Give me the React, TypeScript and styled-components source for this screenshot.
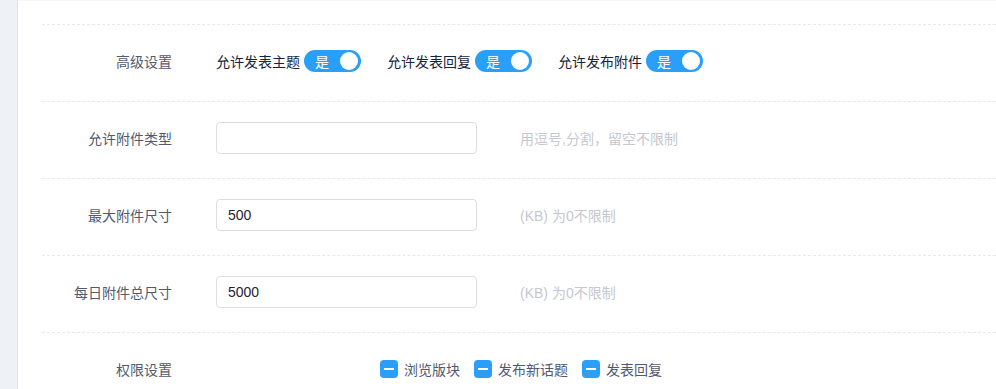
import React from "react";
import styled, { createGlobalStyle } from "styled-components";

const Global = createGlobalStyle`
  html, body { margin: 0; padding: 0; background: #fff; }
  body { font-family: "Liberation Sans", "Noto Sans CJK SC", sans-serif; }
  * { box-sizing: border-box; }
`;

const Page = styled.div`
  display: flex;
  height: 389px;
  overflow: hidden;
`;

const Sidebar = styled.div`
  width: 18px;
  flex: none;
  background: #eef1f5;
  border-right: 1px solid #dfe3e8;
`;

const Main = styled.div`
  flex: 1;
  background: #fff;
  border-top: 1px solid #f5f6f8;
  padding: 23px 0 0 24px;
`;

const Row = styled.div<{ $h?: number }>`
  display: grid;
  grid-template-columns: 130px 1fr;
  column-gap: 44px;
  align-items: center;
  height: ${(p) => p.$h ?? 77}px;
  padding-bottom: 4px;
  border-top: 1px dashed #e6e8eb;
`;

const Label = styled.div`
  text-align: right;
  font-size: 14px;
  color: #515a6e;
`;

const Content = styled.div<{ $indent?: number }>`
  display: flex;
  align-items: center;
  padding-left: ${(p) => p.$indent ?? 0}px;
`;

const SwitchGroup = styled.div`
  display: flex;
  align-items: center;
  gap: 4px;
  margin-right: 26px;
  font-size: 14px;
  color: #17233d;
`;

const Switch = styled.span`
  position: relative;
  display: inline-flex;
  align-items: center;
  width: 57px;
  height: 22px;
  border-radius: 11px;
  background: #2a9ffa;
  color: #fff;
  font-size: 14px;
  padding-left: 11px;
  &::after {
    content: "";
    position: absolute;
    right: 3px;
    top: 2px;
    width: 18px;
    height: 18px;
    border-radius: 50%;
    background: #fff;
  }
`;

const Input = styled.input`
  width: 261px;
  height: 32px;
  border: 1px solid #dcdee2;
  border-radius: 4px;
  padding: 0 11px;
  font-size: 14px;
  font-family: "Liberation Sans", "Noto Sans CJK SC", sans-serif;
  color: #1f2430;
  outline: none;
  background: #fff;
`;

const Hint = styled.span`
  margin-left: 43px;
  font-size: 14px;
  color: #c5c8ce;
`;

const CheckItem = styled.label`
  display: flex;
  align-items: center;
  gap: 6px;
  margin-right: 14px;
  font-size: 14px;
  color: #515a6e;
`;

const CheckBox = styled.span`
  position: relative;
  width: 18px;
  height: 18px;
  border-radius: 4px;
  background: #2a9ffa;
  &::after {
    content: "";
    position: absolute;
    left: 4px;
    right: 4px;
    top: 8px;
    height: 2px;
    background: #fff;
  }
`;

const switches = ["允许发表主题", "允许发表回复", "允许发布附件"];
const perms = ["浏览版块", "发布新话题", "发表回复"];

export default function App() {
  return (
    <Page>
      <Global />
      <Sidebar />
      <Main>
        <Row>
          <Label>高级设置</Label>
          <Content>
            {switches.map((s) => (
              <SwitchGroup key={s}>
                {s}
                <Switch>是</Switch>
              </SwitchGroup>
            ))}
          </Content>
        </Row>
        <Row>
          <Label>允许附件类型</Label>
          <Content>
            <Input defaultValue="" />
            <Hint>用逗号,分割，留空不限制</Hint>
          </Content>
        </Row>
        <Row>
          <Label>最大附件尺寸</Label>
          <Content>
            <Input defaultValue="500" />
            <Hint>(KB) 为0不限制</Hint>
          </Content>
        </Row>
        <Row>
          <Label>每日附件总尺寸</Label>
          <Content>
            <Input defaultValue="5000" />
            <Hint>(KB) 为0不限制</Hint>
          </Content>
        </Row>
        <Row>
          <Label>权限设置</Label>
          <Content $indent={164}>
            {perms.map((p) => (
              <CheckItem key={p}>
                <CheckBox />
                {p}
              </CheckItem>
            ))}
          </Content>
        </Row>
      </Main>
    </Page>
  );
}
